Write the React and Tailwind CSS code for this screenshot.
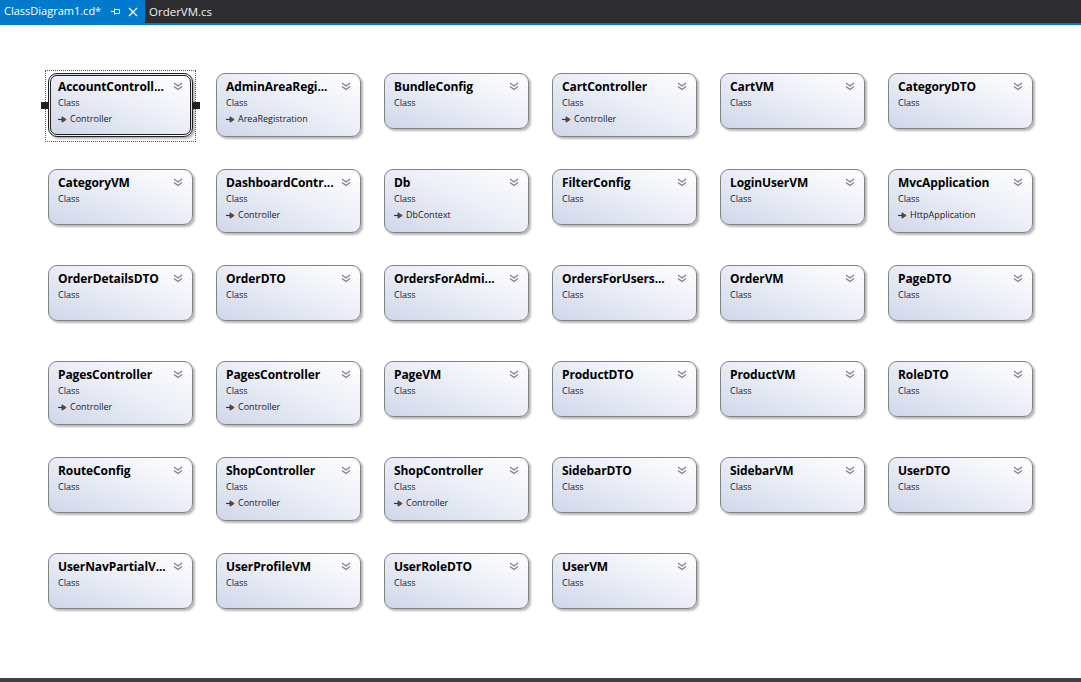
import React from "react";

const rows = [
  [
    ["AccountControll...", "Controller", true],
    ["AdminAreaRegi...", "AreaRegistration"],
    ["BundleConfig"],
    ["CartController", "Controller"],
    ["CartVM"],
    ["CategoryDTO"],
  ],
  [
    ["CategoryVM"],
    ["DashboardContr...", "Controller"],
    ["Db", "DbContext"],
    ["FilterConfig"],
    ["LoginUserVM"],
    ["MvcApplication", "HttpApplication"],
  ],
  [
    ["OrderDetailsDTO"],
    ["OrderDTO"],
    ["OrdersForAdmi..."],
    ["OrdersForUsers..."],
    ["OrderVM"],
    ["PageDTO"],
  ],
  [
    ["PagesController", "Controller"],
    ["PagesController", "Controller"],
    ["PageVM"],
    ["ProductDTO"],
    ["ProductVM"],
    ["RoleDTO"],
  ],
  [
    ["RouteConfig"],
    ["ShopController", "Controller"],
    ["ShopController", "Controller"],
    ["SidebarDTO"],
    ["SidebarVM"],
    ["UserDTO"],
  ],
  [
    ["UserNavPartialV..."],
    ["UserProfileVM"],
    ["UserRoleDTO"],
    ["UserVM"],
  ],
];

function Chevron() {
  return (
    <svg width="10" height="9" viewBox="0 0 10 9" className="shrink-0 mt-[3px]">
      <path d="M1 1 L5 4 L9 1" fill="none" stroke="#808080" strokeWidth="1.3" />
      <path d="M1 4.5 L5 7.5 L9 4.5" fill="none" stroke="#808080" strokeWidth="1.3" />
    </svg>
  );
}

function BaseArrow() {
  return (
    <svg width="9" height="7" viewBox="0 0 9 7" className="shrink-0">
      <path d="M0 3.5 H4" stroke="#333" strokeWidth="1.2" />
      <path d="M4 0.8 L8.2 3.5 L4 6.2 Z" fill="#555" stroke="#333" strokeWidth="0.8" />
    </svg>
  );
}

function Card({ name, base, selected }) {
  const inner = (
    <div
      className={
        "relative w-[145px] rounded-[9px] bg-[linear-gradient(to_top_right,#d0d7ea_0%,#eceff7_55%,#ffffff_100%)] shadow-[2px_2px_2px_rgba(0,0,0,0.28)] " +
        (selected ? "border-[3px] border-double border-[#1e1e1e] " : "border border-[#828282] ") +
        (base ? "h-[64px]" : "h-[56px]")
      }
    >
      <div className={selected ? "pl-[7px] pr-[7px] pt-[3px]" : "pl-[9px] pr-[9px] pt-[5px]"}>
        <div className="flex items-start justify-between">
          <span className="whitespace-nowrap text-[12px] leading-[16px] font-bold text-black tracking-[-0.1px]">
            {name}
          </span>
          <Chevron />
        </div>
        <div className="text-[9px] leading-[12px] text-[#1a1a1a] mt-[2px]">Class</div>
        {base && (
          <div className="flex items-center gap-[3px] text-[9px] leading-[12px] text-[#1a1a1a] mt-[4px]">
            <BaseArrow />
            <span>{base}</span>
          </div>
        )}
      </div>
    </div>
  );
  if (!selected) return inner;
  return (
    <div className="relative -m-[3px] border border-dotted border-[#555] p-[2px] pb-[4px] pr-[2px]">
      {inner}
      <div className="absolute left-[-5px] top-[31px] w-[7px] h-[7px] bg-[#222]" />
      <div className="absolute right-[-5px] top-[31px] w-[7px] h-[7px] bg-[#222]" />
    </div>
  );
}

export default function App() {
  return (
    <div
      className="w-[1081px] h-[682px] flex flex-col bg-white overflow-hidden"
      style={{ fontFamily: '"Open Sans", "Noto Sans", "Liberation Sans", sans-serif' }}
    >
      <div className="h-[23px] bg-[#2d2d30] flex items-stretch shrink-0">
        <div className="w-[145px] bg-[#007acc] flex items-center pl-[4px] text-white text-[11px]">
          <span className="whitespace-nowrap">ClassDiagram1.cd*</span>
          <svg width="9" height="9" viewBox="0 0 9 9" className="ml-[10px]">
            <path d="M0 4.5 H3" stroke="white" strokeWidth="1" />
            <path d="M3.5 1.5 V7.5" stroke="white" strokeWidth="1" />
            <path d="M3.5 2.5 H8.5 V6.5 H3.5" fill="none" stroke="white" strokeWidth="1" />
          </svg>
          <svg width="10" height="10" viewBox="0 0 10 10" className="ml-[8px]">
            <path d="M1 1 L9 9 M9 1 L1 9" stroke="white" strokeWidth="1.3" />
          </svg>
        </div>
        <div className="flex items-center pl-[4px] text-[#f1f1f1] text-[11.5px]">OrderVM.cs</div>
      </div>
      <div className="h-[2px] bg-[#007acc] shrink-0" />
      <div className="flex-1 pl-[48px] pt-[48px] flex flex-col gap-[32px]">
        {rows.map((row, i) => (
          <div key={i} className="flex items-start gap-[23px] h-[64px]">
            {row.map(([name, base, selected], j) => (
              <Card key={j} name={name} base={base} selected={selected} />
            ))}
          </div>
        ))}
      </div>
      <div className="h-[4px] bg-[#3f3f46] shrink-0" />
    </div>
  );
}
